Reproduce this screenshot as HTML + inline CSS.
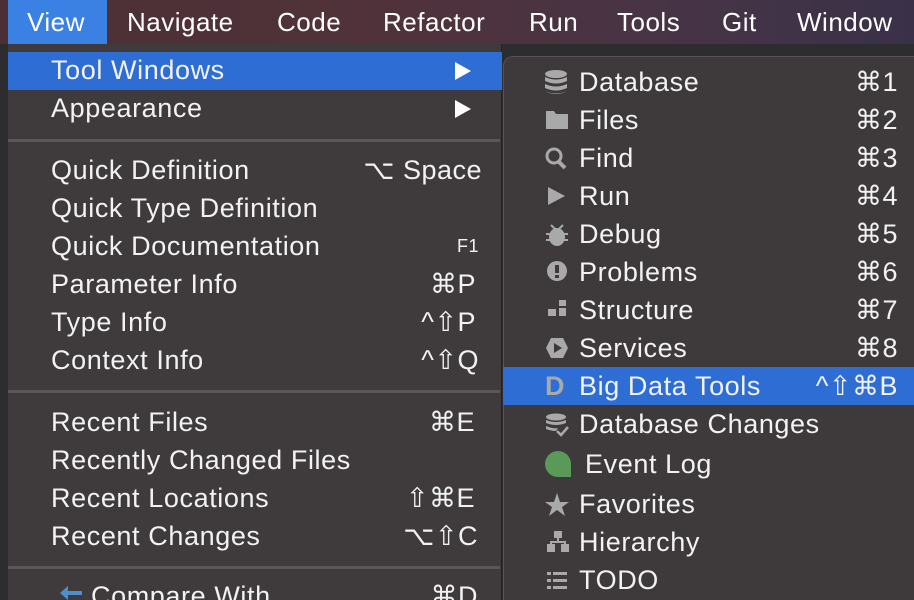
<!DOCTYPE html>
<html><head><meta charset="utf-8"><style>
*{margin:0;padding:0;box-sizing:border-box}
html{width:914px;height:600px;overflow:hidden}
body{width:914px;height:600px;overflow:hidden;background:#2d2c2e;font-family:"Liberation Sans",sans-serif;color:#f2f2f2;position:relative}
.bar{position:absolute;left:0;top:0;width:914px;height:44px;background:linear-gradient(90deg,#4a3034 0%,#51323a 40%,#463446 75%,#3a3148 100%)}
.bar span{position:absolute;top:7px;font-size:26px;color:#fff;letter-spacing:0.5px}
.view{position:absolute;left:8px;top:0;width:99px;height:44px;background:#3b80e3}
.m1{position:absolute;left:8px;top:44px;width:494px;height:556px;background:#3f3b3c;border-right:1px solid #222}
.m2{position:absolute;left:503px;top:56px;width:420px;height:544px;background:#3e3a3b;border-radius:10px 0 0 0;border:1px solid #555;border-bottom:none}
.r{position:absolute;font-size:27px;line-height:38px;height:38px;white-space:nowrap;letter-spacing:0.6px}
.hl{position:absolute;background:#2e6ed4}
.sep{position:absolute;left:8px;width:492px;height:3px;background:#5a5758}
.k{position:absolute;font-size:27px;line-height:38px;text-align:right;white-space:nowrap;letter-spacing:0.5px}
.ic{position:absolute;fill:#a9a9a9}
</style></head><body>
<div class="bar"></div>
<div class="view"></div>
<div class="bar" style="background:none"><span style="left:27px">View</span><span style="left:127px">Navigate</span><span style="left:277px">Code</span><span style="left:383px">Refactor</span><span style="left:529px">Run</span><span style="left:617px">Tools</span><span style="left:722px">Git</span><span style="left:797px">Window</span></div>
<div class="m1"></div>
<div class="hl" style="left:8px;top:52px;width:494px;height:38px"></div>
<div class="sep" style="top:139px"></div>
<div class="sep" style="top:390px"></div>
<div class="sep" style="top:566px"></div>

<div class="r" style="left:51px;top:51px">Tool Windows</div>
<div class="r" style="left:51px;top:89px">Appearance</div>
<svg class="ic" style="left:453px;top:61px;fill:#fff" width="20" height="20"><path d="M2 1L18 10L2 19Z"/></svg>
<svg class="ic" style="left:453px;top:99px;fill:#fff" width="20" height="20"><path d="M2 1L18 10L2 19Z"/></svg>

<div class="r" style="left:51px;top:151px">Quick Definition</div>
<div class="r" style="left:51px;top:189px">Quick Type Definition</div>
<div class="r" style="left:51px;top:227px">Quick Documentation</div>
<div class="r" style="left:51px;top:265px">Parameter Info</div>
<div class="r" style="left:51px;top:303px">Type Info</div>
<div class="r" style="left:51px;top:341px">Context Info</div>
<div class="k" style="right:432px;top:151px">⌥ Space</div>
<div class="k" style="right:435px;top:227px;font-size:18px">F1</div>
<div class="k" style="right:438px;top:265px">⌘P</div>
<div class="k" style="right:438px;top:303px">^⇧P</div>
<div class="k" style="right:435px;top:341px">^⇧Q</div>

<div class="r" style="left:51px;top:403px">Recent Files</div>
<div class="r" style="left:51px;top:441px">Recently Changed Files</div>
<div class="r" style="left:51px;top:479px">Recent Locations</div>
<div class="r" style="left:51px;top:517px">Recent Changes</div>
<div class="k" style="right:439px;top:403px">⌘E</div>
<div class="k" style="right:439px;top:479px">⇧⌘E</div>
<div class="k" style="right:436px;top:517px">⌥⇧C</div>
<div class="r" style="left:91px;top:577px">Compare With</div>
<div class="k" style="right:436px;top:577px">⌘D</div>
<svg class="ic" style="left:60px;top:586px;fill:#4a8fd0" width="22" height="14"><path d="M8 0L0 7L8 14V9H22V5H8Z"/></svg>

<div class="m2"></div>
<div class="hl" style="left:503px;top:367px;width:411px;height:38px"></div>
<div class="r" style="left:579px;top:63px">Database</div>
<div class="r" style="left:579px;top:101px">Files</div>
<div class="r" style="left:579px;top:139px">Find</div>
<div class="r" style="left:579px;top:177px">Run</div>
<div class="r" style="left:579px;top:215px">Debug</div>
<div class="r" style="left:579px;top:253px">Problems</div>
<div class="r" style="left:579px;top:291px">Structure</div>
<div class="r" style="left:579px;top:329px">Services</div>
<div class="r" style="left:579px;top:367px">Big Data Tools</div>
<div class="r" style="left:579px;top:405px">Database Changes</div>
<div class="r" style="left:585px;top:445px">Event Log</div>
<div class="r" style="left:579px;top:485px">Favorites</div>
<div class="r" style="left:579px;top:523px">Hierarchy</div>
<div class="r" style="left:579px;top:561px">TODO</div>
<div class="k" style="right:16px;top:63px">⌘1</div>
<div class="k" style="right:16px;top:101px">⌘2</div>
<div class="k" style="right:16px;top:139px">⌘3</div>
<div class="k" style="right:16px;top:177px">⌘4</div>
<div class="k" style="right:16px;top:215px">⌘5</div>
<div class="k" style="right:16px;top:253px">⌘6</div>
<div class="k" style="right:16px;top:291px">⌘7</div>
<div class="k" style="right:16px;top:329px">⌘8</div>
<div class="k" style="right:16px;top:367px">^⇧⌘B</div>

<svg class="ic" style="left:545px;top:70px" width="24" height="26"><ellipse cx="11" cy="4" rx="11" ry="4"/><path d="M0 7Q11 12 22 7V11Q11 16 0 11Z"/><path d="M0 14Q11 19 22 14V18Q11 23 0 18Z"/><path d="M0 21Q11 26 22 21V21Q11 27 0 21Z"/></svg>
<svg class="ic" style="left:546px;top:111px" width="22" height="20"><path d="M0 0H8L10 3H22V18H0Z"/></svg>
<svg class="ic" style="left:545px;top:147px" width="24" height="24"><circle cx="9" cy="9" r="7" fill="none" stroke="#a9a9a9" stroke-width="3"/><path d="M13 14L20 21" stroke="#a9a9a9" stroke-width="4"/></svg>
<svg class="ic" style="left:548px;top:187px" width="20" height="20"><path d="M0 0L17 9L0 18Z"/></svg>
<svg class="ic" style="left:546px;top:223px" width="22" height="24"><ellipse cx="11" cy="14" rx="8" ry="9"/><path d="M5 2L9 6M17 2L13 6" stroke="#a9a9a9" stroke-width="2"/><rect x="0" y="10" width="22" height="2"/><rect x="0" y="16" width="22" height="2"/></svg>
<svg class="ic" style="left:546px;top:260px" width="22" height="22"><circle cx="11" cy="11" r="10"/><rect x="9" y="5" width="4" height="8" fill="#3e3a3b"/><rect x="9" y="15" width="4" height="3" fill="#3e3a3b"/></svg>
<svg class="ic" style="left:548px;top:300px" width="20" height="20"><rect x="11" y="0" width="7" height="6"/><rect x="11" y="8" width="7" height="8"/><rect x="0" y="9" width="8" height="7"/></svg>
<svg class="ic" style="left:545px;top:337px" width="24" height="24"><path d="M6 1H18L23 11L18 21H6L1 11Z"/><path d="M9 6L17 11L9 16Z" fill="#3e3a3b"/></svg>
<div class="r" style="left:545px;top:367px;color:#a9a9a9;font-weight:bold">D</div>
<svg class="ic" style="left:545px;top:413px" width="24" height="26"><ellipse cx="11" cy="4" rx="10" ry="3.5"/><path d="M1 7Q11 11 21 7V10Q11 14 1 10Z"/><path d="M1 13Q8 16 13 15L11 18Q6 18 1 16Z"/><path d="M12 18L16 22L23 14" fill="none" stroke="#a9a9a9" stroke-width="2.5"/></svg>
<svg style="position:absolute;left:545px;top:451px" width="26" height="26"><path d="M0 13A13 13 0 1 1 26 13V26H13A13 13 0 0 1 0 13Z" fill="#5a9a59"/></svg>
<svg class="ic" style="left:544px;top:492px" width="26" height="26"><path d="M13 1L16 10H25L18 15L21 24L13 18L5 24L8 15L1 10H10Z"/></svg>
<svg class="ic" style="left:547px;top:531px" width="22" height="22"><rect x="7" y="0" width="8" height="7"/><rect x="10" y="7" width="2" height="4"/><rect x="3" y="10" width="16" height="2"/><rect x="3" y="10" width="2" height="4"/><rect x="17" y="10" width="2" height="4"/><rect x="0" y="13" width="8" height="8"/><rect x="14" y="13" width="8" height="8"/></svg>
<svg class="ic" style="left:547px;top:571px" width="22" height="20"><rect x="0" y="1" width="4" height="3"/><rect x="6" y="1" width="14" height="3"/><rect x="0" y="8" width="4" height="3"/><rect x="6" y="8" width="14" height="3"/><rect x="0" y="15" width="4" height="3"/><rect x="6" y="15" width="14" height="3"/></svg>
</body></html>
